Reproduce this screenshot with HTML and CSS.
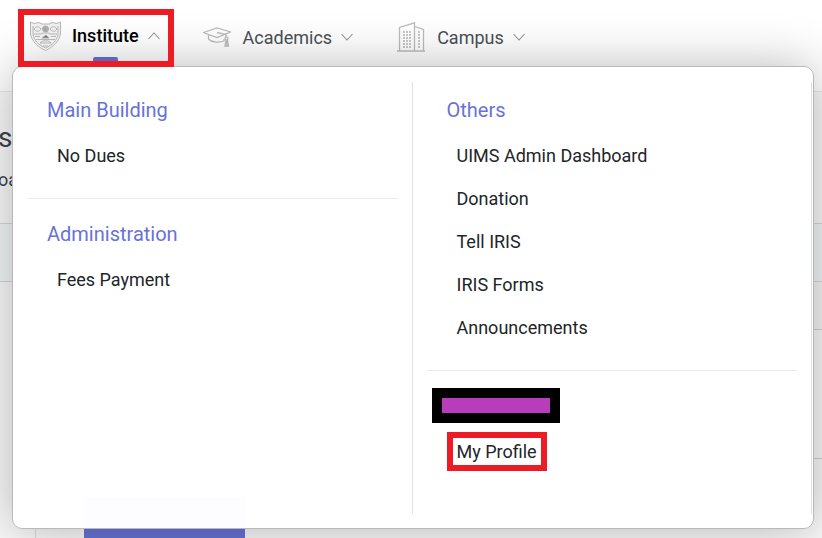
FILE: index.html
```html
<!DOCTYPE html>
<html lang="en">
<head>
    <meta charset="UTF-8">
    <meta name="viewport" content="width=device-width, initial-scale=1.0">
    <title>Institute</title>
    <link rel="stylesheet" href="styles.css">
</head>
<body>
    <!-- Top Navigation Bar -->
    <header class="top-nav">
        <nav class="nav-links">
            <button type="button" class="nav-item active highlight" aria-expanded="true">
                <svg class="nav-icon crest" viewBox="0 0 31 30" aria-hidden="true">
                    <path d="M.5 1L4 2.500L9 1.500L12 3H19L22 1.500L27 2.500L30.500 1V13C29 21 23 26 15.500 29.500C8 26 2 21 .5 13Z" fill="#eee" />
                    <path d="M3 5V13C4 20 9 24 15.500 27C22 24 27 20 28 13V5" />
                    <circle cx="15.500" cy="8" r="3" fill="#b0b0b0" />
                    <path d="M15.500 5V11M12.500 8H18.500" />
                    <path d="M4 8C6 5 9 5 11 8C9 11 6 11 4 8M20 8C22 5 25 5 27 8C25 11 22 11 20 8M4 13H11L13 12H18L20 13H27" />
                    <path d="M5 15.500H10M21 15.500H26M6 18.500H25M10 22C13 19 18 19 21 22M10 22H21M13 25H18" />
                    <path d="M12 17L16 14L19 17Z" fill="#777" />
                </svg>
                <span class="nav-label">Institute</span>
                <svg class="chevron" viewBox="0 0 12 8" aria-hidden="true"><path d="M.5 7L6 1L11.500 7" /></svg>
            </button>
            <button type="button" class="nav-item" aria-expanded="false">
                <svg class="nav-icon" viewBox="0 0 28 30" aria-hidden="true">
                    <path d="M.5 10.500L14 6L27.500 10L14 15.500ZM5.500 12.500V17C8 20 15 21 21 19V17M14 10.500L23 12.500V15" />
                    <circle cx="23.500" cy="16.500" r="1.500" />
                    <path d="M23 18L22 24H25.500L24.500 18M23.700 19V24" />
                </svg>
                <span class="nav-label">Academics</span>
                <svg class="chevron" viewBox="0 0 12 8" aria-hidden="true"><path d="M.5 1L6 7L11.500 1" /></svg>
            </button>
            <button type="button" class="nav-item" aria-expanded="false">
                <svg class="nav-icon" viewBox="0 0 28 30" aria-hidden="true">
                    <path d="M0 29H28M2.500 29V5.500L17.500 .8V29M17.500 4.500L26.500 7.500V29" />
                    <path class="windows" d="M7 9V26M10 9V26M13 9V26M22 9V26" />
                </svg>
                <span class="nav-label">Campus</span>
                <svg class="chevron" viewBox="0 0 12 8" aria-hidden="true"><path d="M.5 1L6 7L11.500 1" /></svg>
            </button>
        </nav>

        <!-- Institute Menu -->
        <div class="mega-menu">
            <div class="menu-column">
                <section class="menu-section">
                    <h2>Main Building</h2>
                    <ul>
                        <li><a href="#">No Dues</a></li>
                    </ul>
                </section>
                <section class="menu-section">
                    <h2>Administration</h2>
                    <ul>
                        <li><a href="#">Fees Payment</a></li>
                    </ul>
                </section>
            </div>
            <div class="menu-column">
                <section class="menu-section">
                    <h2>Others</h2>
                    <ul>
                        <li><a href="#">UIMS Admin Dashboard</a></li>
                        <li><a href="#">Donation</a></li>
                        <li><a href="#">Tell IRIS</a></li>
                        <li><a href="#">IRIS Forms</a></li>
                        <li><a href="#">Announcements</a></li>
                    </ul>
                </section>
                <section class="menu-section">
                    <div class="masked-name"></div>
                    <ul>
                        <li><a href="#" class="profile-link">My Profile</a></li>
                    </ul>
                </section>
            </div>
        </div>
    </header>

    <!-- Page behind the menu -->
    <main>
        <div class="page-title">
            <h1>s</h1>
            <p>oa</p>
        </div>
        <div class="toolbar"></div>
        <div class="card-head"></div>
        <div class="card-body"></div>
        <div class="panel">
            <button type="button" class="primary" aria-label="Open"></button>
        </div>
    </main>
</body>
</html>
```
FILE: styles.css
```css
/* Basic Reset */
* {
    margin: 0;
    padding: 0;
    box-sizing: border-box;
}

body {
    font-family: Roboto, Arial, sans-serif;
    background-color: #f9f9f9;
    color: #212529;
    display: flex;
    flex-direction: column;
    height: 100vh;
    overflow: hidden;
}

/* Top Navigation Bar */
.top-nav {
    position: relative;
    flex: none;
    height: 92px;
    padding: 9px 18px;
    background-color: white;
    border-bottom: 1px solid #e6e7f0;
}

.nav-links {
    display: flex;
    gap: 29px;
}

.nav-item {
    position: relative;
    display: flex;
    align-items: center;
    height: 58px;
    padding-bottom: 2px;
    border: none;
    background: none;
    color: #495057;
    font-family: inherit;
    font-size: 18px;
    cursor: pointer;
}

.nav-item.active {
    color: black;
    font-weight: 500;
    padding: 0 8px 5px 6px;
}

/* Red frame, drawn above the menu edge */
.highlight {
    z-index: 3;
    border: 6px solid #ed1c24;
}

/* Marker under the open item */
.nav-item.active::after {
    content: "";
    position: absolute;
    bottom: 0;
    left: 69px;
    width: 25px;
    height: 4px;
    background-color: #5c66c0;
    border-radius: 2px 2px 0 0;
}

.nav-icon {
    width: 28px;
    height: 30px;
    margin-right: 12px;
    fill: none;
    stroke: #bcbcbc;
    stroke-width: 1.3;
}

.nav-icon.crest {
    width: 31px;
    margin-right: 11px;
    stroke: #a6a6a6;
    stroke-width: 0.8;
}

.nav-icon .windows {
    stroke: #c8c8c8;
    stroke-width: 2;
    stroke-dasharray: 2 1;
}

.nav-item + .nav-item {
    margin-right: 15px;
}

.chevron {
    width: 12px;
    height: 8px;
    margin-left: 9px;
    fill: none;
    stroke: #8e9295;
    stroke-width: 1.1;
}

/* Drop-down Menu */
.mega-menu {
    position: absolute;
    z-index: 2;
    top: 66px;
    left: 12px;
    right: 8px;
    display: grid;
    grid-template-columns: 1fr 1fr;
    padding: 15px 1px 14px 0;
    background-color: rgba(255, 255, 255, 0.99);
    border: 1px solid #b9b9b9;
    border-radius: 10px;
    box-shadow: 0 0 50px rgba(0, 0, 0, 0.28);
}

.menu-column {
    padding: 0 14px 20px;
    border-right: 1px solid #dee2e6;
}

.menu-section {
    padding: 12px 0 21px;
}

.menu-section + .menu-section {
    padding-top: 19px;
    border-top: 1px solid #e9ecef;
}

.menu-section h2 {
    padding-left: 20px;
    margin-bottom: 8px;
    color: #6772d8;
    font-size: 20px;
    font-weight: 400;
    line-height: 32px;
}

.menu-section ul {
    list-style: none;
    padding-left: 30px;
}

.menu-section li {
    display: flex;
    align-items: center;
    height: 43px;
}

.menu-section a {
    color: #212529;
    font-size: 18px;
    text-decoration: none;
}

.menu-section a:hover {
    color: #6772d8;
}

.masked-name {
    width: 128px;
    height: 35px;
    margin: -2px 0 7px 5px;
    border: 10px solid black;
    background-color: #b83dba;
}

.menu-section .profile-link {
    margin-left: -10px;
    padding: 3px 4px;
    border: 6px solid #ed1c24;
}

/* Page Content */
main {
    flex: 1;
    display: flex;
    flex-direction: column;
}

.page-title {
    height: 131px;
    padding-top: 28px;
    margin-left: -2px;
    color: #3b4550;
}

.page-title h1 {
    font-size: 28px;
    font-weight: 400;
    line-height: 36px;
}

.page-title p {
    margin-top: 12px;
    font-size: 18px;
    line-height: 24px;
}

.toolbar {
    height: 59px;
    background-color: #f2f5f5;
    border-top: 1px solid #d6d6d6;
    border-bottom: 1px solid #d6d6d6;
}

.card-head {
    height: 48px;
    margin-left: 30px;
    background-color: #f4f4f4;
    border-bottom: 1px solid #d0d0d0;
}

.card-body {
    height: 129px;
    margin-left: 30px;
    border-bottom: 1px solid #d0d0d0;
}

.panel {
    flex: 1;
    margin-left: 35px;
    padding: 38px 48px 0;
    border-left: 1px solid #dcdcdc;
}

.primary {
    width: 161px;
    height: 100%;
    border: none;
    background-color: #6772d8;
}
```
